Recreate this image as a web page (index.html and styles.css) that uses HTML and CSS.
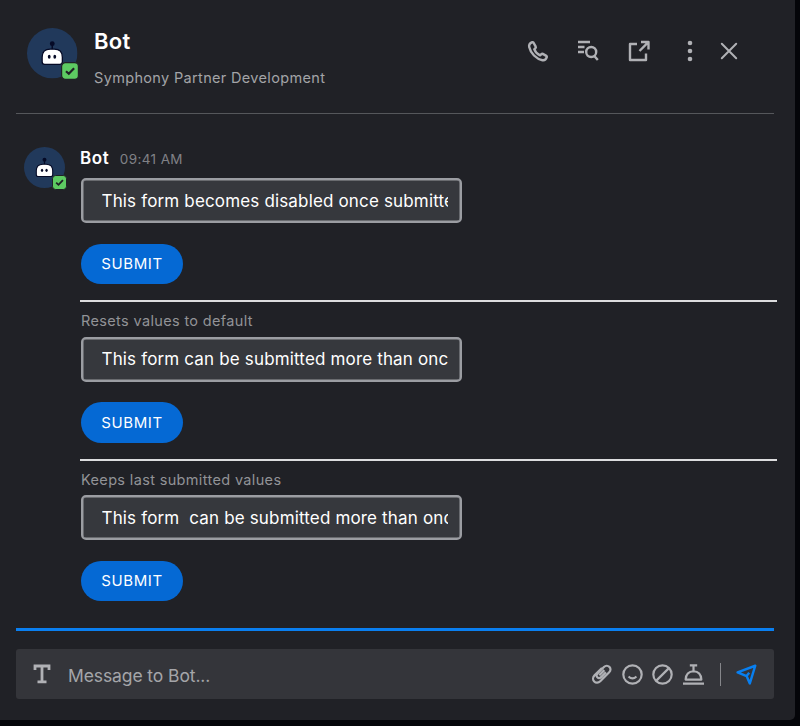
FILE: index.html
```html
<!DOCTYPE html>
<html lang="en">
<head>
<meta charset="utf-8">
<title>Bot</title>
<link rel="stylesheet" href="styles.css">
</head>
<body>
<svg class="defs" aria-hidden="true">
  <symbol id="robot" viewBox="0 0 50 50">
    <circle cx="25" cy="25" r="25" fill="#21395b"/>
    <path d="M25 22V16" stroke="#050a26" stroke-width="1.500"/>
    <circle cx="25" cy="15.500" r="2.400" fill="#050a26"/>
    <path d="M15 33.500V29q0-8 8-8h4q8 0 8 8v4.500q0 2.500-2.500 2.500H17.500q-2.500 0-2.500-2.500z" fill="#fff" stroke="#050a26" stroke-width="1.300"/>
    <ellipse cx="22" cy="28.500" rx="1.400" ry="2" fill="#050a26"/>
    <ellipse cx="27.500" cy="28.500" rx="1.400" ry="2" fill="#050a26"/>
  </symbol>
  <symbol id="check" viewBox="0 0 18 18">
    <rect x=".6" y=".6" width="16.800" height="16.800" rx="3.800" fill="#5dca62" stroke="#202126" stroke-width="1.200"/>
    <path d="M5 9.200l2.800 2.600 5.300-5.600" fill="none" stroke="#202126" stroke-width="2.200"/>
  </symbol>
</svg>
<main class="window">
  <header class="header">
    <div class="avatar"><svg><use href="#robot"/></svg><svg class="status"><use href="#check"/></svg></div>
    <div class="identity">
      <h1>Bot</h1>
      <p>Symphony Partner Development</p>
    </div>
    <nav class="actions">
      <svg class="icon" viewBox="0 0 24 24"><path d="M6.300 3.200C4.400 4 2.700 5.600 3.200 8c1.400 6.200 7 12 13.300 13.200 2.100.4 3.700-1.300 4.300-3 .2-.6 0-1-.5-1.300l-3.500-2c-.5-.3-1-.2-1.400.2l-1.300 1.300c-2-.9-5-4-5.800-6l1.200-1.300c.4-.4.5-.9.200-1.400L7.400 3.500c-.3-.4-.6-.5-1.100-.3z"/></svg>
      <svg class="icon" viewBox="0 0 24 24"><path d="M2 3h12M2 8h6.500M2 13h6"/><circle cx="15.200" cy="13" r="5"/><path d="M18.300 17l3.500 4"/></svg>
      <svg class="icon" viewBox="0 0 24 24"><path d="M10 5H3v16h16v-6.500M14 3h7.500v7.500M20.800 3.700L12.500 12"/></svg>
      <svg class="icon dots" viewBox="0 0 24 24"><circle cx="12" cy="4" r="2.300"/><circle cx="12" cy="12" r="2.300"/><circle cx="12" cy="20" r="2.300"/></svg>
      <svg class="icon close" viewBox="0 0 24 24"><path d="M4.800 4.800l14.400 14.400M19.200 4.800L4.800 19.200"/></svg>
    </nav>
  </header>
  <section class="message">
    <div class="avatar small"><svg><use href="#robot"/></svg><svg class="status"><use href="#check"/></svg></div>
    <div class="content">
      <div class="meta"><strong>Bot</strong><time>09:41 AM</time></div>
      <form class="first">
        <input type="text" value="This form becomes disabled once submitted">
        <button type="button">SUBMIT</button>
      </form>
      <form>
        <label>Resets values to default</label>
        <input type="text" value="This form can be submitted more than once">
        <button type="button">SUBMIT</button>
      </form>
      <form>
        <label>Keeps last submitted values</label>
        <input type="text" value="This form  can be submitted more than once">
        <button type="button">SUBMIT</button>
      </form>
    </div>
  </section>
  <footer class="footer">
    <div class="composer">
      <svg class="format" viewBox="0 0 18 20"><path d="M2 6V2h14v4M9 2v16M4.500 17.800h9"/></svg>
      <span class="placeholder">Message to Bot...</span>
      <div class="tools">
        <svg class="icon" viewBox="0 0 24 24"><path d="M12.500 4.500L4 13c-4.800 4.800 1.800 11.500 6.600 6.700l10.200-10.200c4.300-4.300-1.800-10.300-6-6L7.500 10.800c-3.200 3.200 1 7.200 4 4.200l5.500-5.500M9.500 12.800l5.800-5.800"/></svg>
        <svg class="icon" viewBox="0 0 24 24"><circle cx="12" cy="12" r="10.500"/><path d="M7.500 14.300q4.500 4.300 9 0"/></svg>
        <svg class="icon" viewBox="0 0 24 24"><circle cx="12" cy="12" r="10.500"/><path d="M4.700 19.300L19.300 4.700"/></svg>
        <svg class="icon" viewBox="0 0 24 24"><path d="M0 22.500h24M3 17.800q.5-9.300 9-9.500 8.500.2 9 9.500zM12 8V1.500M7.800 1.500h8.400"/></svg>
        <span class="divider"></span>
        <svg class="icon send" viewBox="0 0 24 24"><path d="M1.800 9.600L22 2l-6.200 20.200-3.700-8.400zM11.800 14l3.300-4"/></svg>
      </div>
    </div>
  </footer>
</main>
</body>
</html>
```
FILE: styles.css
```css
* { box-sizing: border-box; }
body {
  margin: 0;
  height: 726px;
  overflow: hidden;
  background: #040509;
  color: #fff;
  font-family: Inter, "Liberation Sans", sans-serif;
}
.defs { position: absolute; width: 0; height: 0; }
.window {
  display: flex;
  flex-direction: column;
  width: 795px;
  height: 720px;
  padding: 0 21px 21px 16px;
  background: #202126;
  border-radius: 0 0 5px 0;
}
.header {
  display: flex;
  height: 114px;
  padding: 28px 0 0 11px;
  border-bottom: 1px solid #55575b;
}
.avatar { position: relative; width: 50.5px; height: 50.5px; flex: none; }
.avatar svg { display: block; width: 100%; height: 100%; }
.avatar .status { position: absolute; width: 18px; height: 18px; right: -1px; bottom: -1px; }
.identity { padding-left: 16.5px; }
h1 { margin: -1px 0 0; font-size: 22px; line-height: 28px; font-weight: 600; letter-spacing: .3px; }
.identity p { margin: 13px 0 0; font-size: 14.5px; line-height: 20px; letter-spacing: .34px; color: #a3a4a7; }
.actions { display: flex; margin: 11px 33px 0 auto; }
.icon {
  display: block;
  width: 24px;
  height: 24px;
  fill: none;
  stroke: #b0b1b5;
  stroke-width: 2.4;
  stroke-linejoin: round;
}
.actions .icon + .icon { margin-left: 26.8px; }
.actions .icon.close { margin-left: 15px; stroke-width: 2; stroke-linecap: round; }
.icon.dots { fill: #b0b1b5; stroke: none; }
.message { display: flex; height: 514px; padding: 34px 0 0 8px; }
.avatar.small { width: 41px; height: 41px; margin-top: -1px; }
.avatar.small .status { width: 15px; height: 15px; right: -2px; bottom: -2px; }
.content { width: 697px; margin-left: 15px; flex: none; }
.meta { display: flex; align-items: baseline; gap: 10.5px; height: 30px; line-height: 20px; }
.meta strong { font-size: 17px; font-weight: 600; letter-spacing: .6px; }
.meta time { font-size: 13.5px; letter-spacing: .38px; color: #808186; }
form {
  display: flex;
  flex-direction: column;
  align-items: flex-start;
  height: 158.7px;
  padding: 9px 0 0 1px;
  border-top: 2px solid #dcdcde;
}
form.first { height: 122px; padding-top: 0; border-top: 0; }
label { height: 25.5px; font-size: 14.5px; line-height: 20px; letter-spacing: .35px; color: #929397; }
input {
  width: 381px;
  height: 45px;
  padding: 0 12.5px 0 18.5px;
  border: 2px solid #9b9da2;
  border-radius: 5px;
  box-shadow: inset 0 0 0 .5px #9b9da2;
  background: #36383d;
  color: #fff;
  font: 17px Inter, sans-serif;
  letter-spacing: .16px;
}
button {
  width: 102px;
  height: 40.5px;
  margin-top: 20.5px;
  padding: 0;
  border: 0;
  border-radius: 21px;
  background: #0569d4;
  color: #fff;
  font: 15px Inter, sans-serif;
  letter-spacing: .6px;
}
.footer { border-top: 3px solid #0a7ff0; padding-top: 18px; }
.composer {
  display: flex;
  align-items: center;
  height: 50px;
  padding: 0 17px;
  border-radius: 3px;
  background: #34353a;
}
.format { width: 18px; height: 20px; fill: none; stroke: #b0b1b5; stroke-width: 2.8; }
.placeholder { margin: 3px 0 0 17px; font-size: 17.5px; letter-spacing: -.1px; color: #a4a5a9; }
.tools { display: flex; align-items: center; margin-left: auto; }
.tools .icon { width: 21px; height: 21px; margin-right: 9.8px; stroke-width: 2.5; overflow: visible; }
.tools .divider { width: 1px; height: 23px; margin: 0 15px 0 6px; background: #85868a; }
.tools .icon.send { margin-right: 0; stroke: #087ff0; stroke-width: 2.8; }
```
